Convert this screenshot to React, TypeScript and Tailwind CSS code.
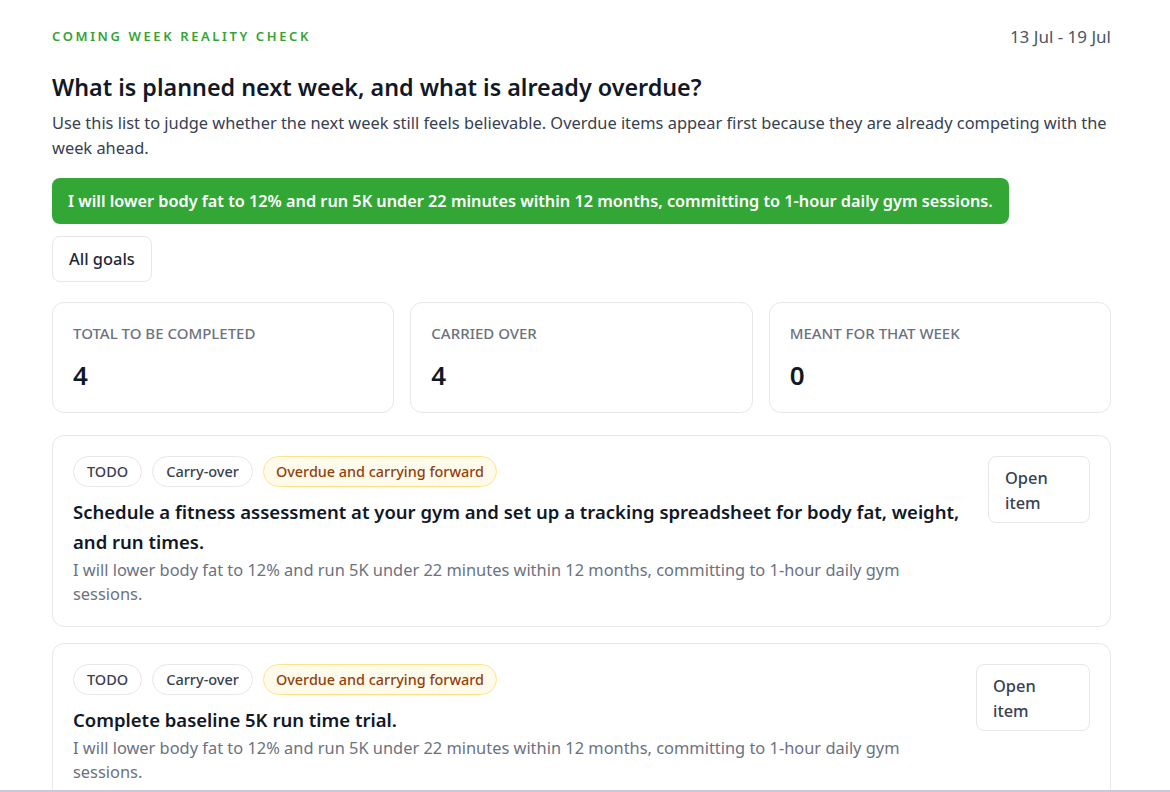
const goal =
  'I will lower body fat to 12% and run 5K under 22 minutes within 12 months, committing to 1-hour daily gym sessions.'

interface Item {
  title: string
  buttonWidth: string
}

const items: Item[] = [
  {
    title:
      'Schedule a fitness assessment at your gym and set up a tracking spreadsheet for body fat, weight, and run times.',
    buttonWidth: 'w-[102px]',
  },
  { title: 'Complete baseline 5K run time trial.', buttonWidth: 'w-[114px]' },
]

const stats = [
  { label: 'Total to be completed', value: '4' },
  { label: 'Carried over', value: '4' },
  { label: 'Meant for that week', value: '0' },
]

function Badge({ children, warn }: { children: string; warn?: boolean }) {
  return (
    <span
      className={
        warn
          ? 'rounded-full border border-[#fde68a] bg-[#fffbeb] px-3 h-[31px] flex items-center text-[14.4px] font-medium text-[#92400e]'
          : 'rounded-full border border-[#e5e7eb] bg-white px-[13px] h-[31px] flex items-center text-[14.5px] font-medium text-[#374151]'
      }
    >
      {children}
    </span>
  )
}

function ItemCard({ item }: { item: Item }) {
  return (
    <div className="flex gap-5 rounded-xl border border-[#e5e7eb] bg-white p-5">
      <div className="flex-1 min-w-0">
        {/* Status badges */}
        <div className="flex gap-[10px]">
          <Badge>TODO</Badge>
          <Badge>Carry-over</Badge>
          <Badge warn>Overdue and carrying forward</Badge>
        </div>
        <h3 className="mt-[10px] text-[18.5px] font-semibold leading-[30px] text-[#111827]">{item.title}</h3>
        <p className="mt-[1px] text-[16.4px] leading-6 text-[#6b7280]">{goal}</p>
      </div>
      <button
        className={`${item.buttonWidth} h-[67px] shrink-0 self-start rounded-lg border border-[#e5e7eb] bg-white px-4 text-left text-[16.4px] font-medium leading-[25px] text-[#374151]`}
      >
        <span className="block w-min">Open item</span>
      </button>
    </div>
  )
}

export default function App() {
  return (
    <div className="min-h-screen bg-white font-['Noto_Sans',sans-serif]">
      <div className="w-[1059px] ml-[52px] pt-[27px]">
        {/* Header */}
        <div className="flex items-start justify-between">
          <p className="text-[13px] font-semibold tracking-[0.2em] text-[#34a334]">COMING WEEK REALITY CHECK</p>
          <p className="text-[17px] leading-5 text-[#4b5563]">13 Jul - 19 Jul</p>
        </div>

        <h1 className="mt-[24px] text-[23.3px] leading-8 font-semibold text-[#111827]">
          What is planned next week, and what is already overdue?
        </h1>
        <p className="mt-[7px] text-[16.4px] leading-[25px] text-[#374151]">
          Use this list to judge whether the next week still feels believable. Overdue items appear first because they are
          already competing with the week ahead.
        </p>

        {/* Goal banner */}
        <div className="mt-[18px] inline-flex h-[46px] items-center rounded-lg bg-[#32a736] px-4 text-[16.25px] font-semibold text-white">
          {goal}
        </div>

        <div className="mt-3">
          <button className="h-[46px] rounded-lg border border-[#e5e7eb] bg-white px-4 text-[16.4px] font-medium text-[#1f2937]">
            All goals
          </button>
        </div>

        {/* Stats */}
        <div className="mt-[20px] grid grid-cols-3 gap-4">
          {stats.map((s) => (
            <div key={s.label} className="h-[111px] rounded-xl border border-[#e5e7eb] bg-white px-5 pt-[19px]">
              <p className="text-[15px] font-medium uppercase text-[#6b7280]">{s.label}</p>
              <p className="mt-[11px] text-[26px] font-semibold text-[#111827]">{s.value}</p>
            </div>
          ))}
        </div>

        {/* Items */}
        <div className="mt-[22px] flex flex-col gap-4">
          {items.map((item) => (
            <ItemCard key={item.title} item={item} />
          ))}
          <ItemCard item={items[1]} />
        </div>
      </div>
      <div className="fixed bottom-0 left-0 right-0 h-[2px] bg-[#cbc8dc]" />
    </div>
  )
}
